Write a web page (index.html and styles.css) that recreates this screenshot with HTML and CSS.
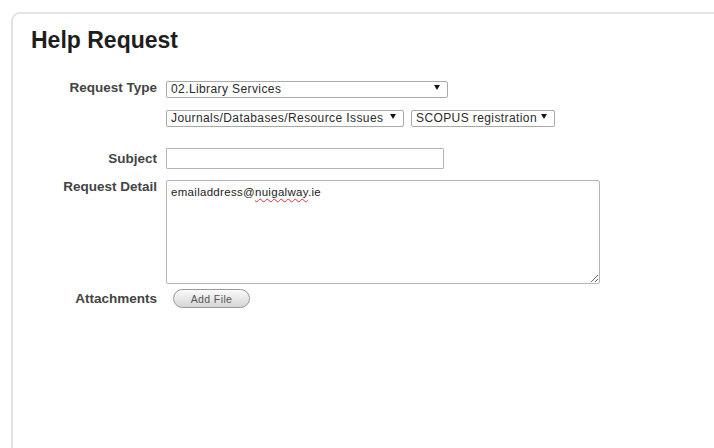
FILE: index.html
```html
<!DOCTYPE html>
<html lang="en">
<head>
<meta charset="utf-8">
<title>Help Request</title>
<link rel="stylesheet" href="styles.css">
</head>
<body>
<section class="panel">
  <h1 class="title">Help Request</h1>
  <form class="form">
    <div class="row">
      <span class="label">Request Type</span>
      <div class="field">
        <label class="select w-type">
          <select><option>02.Library Services</option></select>
          <svg class="caret" viewBox="0 0 7 6"><path d="M0 0h7L3.5 6z"/></svg>
        </label>
      </div>
    </div>
    <div class="row row-sub">
      <span class="label"></span>
      <div class="field">
        <label class="select w-cat">
          <select><option>Journals/Databases/Resource Issues</option></select>
          <svg class="caret" viewBox="0 0 7 6"><path d="M0 0h7L3.5 6z"/></svg>
        </label>
        <label class="select w-item">
          <select><option>SCOPUS registration</option></select>
          <svg class="caret" viewBox="0 0 7 6"><path d="M0 0h7L3.5 6z"/></svg>
        </label>
      </div>
    </div>
    <div class="row row-subject">
      <span class="label">Subject</span>
      <div class="field">
        <input class="text" type="text">
      </div>
    </div>
    <div class="row row-detail">
      <span class="label">Request Detail</span>
      <div class="field">
        <div class="detail" role="textbox">emailaddress@<span class="misspelt">nuigalway</span>.ie</div>
      </div>
    </div>
    <div class="row row-attach">
      <span class="label">Attachments</span>
      <div class="field">
        <button class="add-file" type="button">Add File</button>
      </div>
    </div>
  </form>
</section>
</body>
</html>
```

FILE: styles.css
```css
html {
  overflow: hidden;
}

body {
  margin: 0;
  background: #fff;
  font-family: "Liberation Sans", Arial, sans-serif;
  color: #333;
}

/* open-ended card: no right or bottom edge inside the window */
.panel {
  margin: 12px -20px 0 11px;
  height: 436px;
  border: 2px solid #e4e4e4;
  border-bottom: 0;
  border-radius: 9px 9px 0 0;
  padding: 13px 0 0 18px;
  box-sizing: border-box;
}

.title {
  margin: 0;
  font-size: 23px;
  line-height: 26px;
  font-weight: bold;
  color: #1e1e1e;
}

.form {
  margin-top: 26px;
  display: flex;
  flex-direction: column;
}

.row {
  display: flex;
  align-items: center;
  column-gap: 9px;
}

.label {
  flex: 0 0 126px;
  text-align: right;
  font-size: 13.5px;
  line-height: 16px;
  font-weight: bold;
  color: #444;
}

.field {
  display: flex;
  gap: 7px;
}

.row-sub { margin-top: 12px; }
.row-subject { margin-top: 23px; }
.row-detail { margin-top: 11px; align-items: flex-start; }
.row-detail .label { margin-top: -1px; }
.row-attach { margin-top: 5px; }

.select {
  position: relative;
  display: block;
  height: 17px;
}

.select select {
  appearance: none;
  -webkit-appearance: none;
  width: 100%;
  height: 17px;
  margin: 0;
  padding: 0 0 0 4px;
  border: 1px solid #a9a9a9;
  border-radius: 2px;
  background: #fff;
  font-family: "Liberation Sans", Arial, sans-serif;
  font-size: 12px;
  letter-spacing: 0.4px;
  color: #2a2a2a;
  box-sizing: border-box;
}

.caret {
  position: absolute;
  top: 6px;
  right: 8px;
  width: 6px;
  height: 5px;
  fill: #111;
  pointer-events: none;
}

.w-type { width: 282px; }
.w-cat { width: 238px; }
.w-item { width: 144px; }

.text {
  width: 278px;
  height: 21px;
  margin: 0;
  padding: 0 4px;
  border: 1px solid #b5b5b5;
  border-radius: 1px;
  box-sizing: border-box;
  font: 12px "Liberation Sans", Arial, sans-serif;
}

.detail {
  width: 434px;
  height: 104px;
  padding: 4px 4px;
  border: 1px solid #b5b5b5;
  border-radius: 2px;
  box-sizing: border-box;
  font-size: 11.5px;
  line-height: 14px;
  letter-spacing: 0.3px;
  color: #222;
  overflow: auto;
  resize: both;
}

.misspelt {
  text-decoration: underline wavy #e03030;
  text-decoration-thickness: 1px;
  text-underline-offset: 2px;
}

.add-file {
  margin: 0 0 0 7px;
  width: 77px;
  height: 19px;
  padding: 0;
  border: 1px solid #9a9a9a;
  border-radius: 10px;
  background: linear-gradient(#fbfbfb, #e6e6e6 55%, #d6d6d6);
  font: 10.5px "Liberation Sans", Arial, sans-serif;
  letter-spacing: 0.4px;
  color: #555;
}
```
